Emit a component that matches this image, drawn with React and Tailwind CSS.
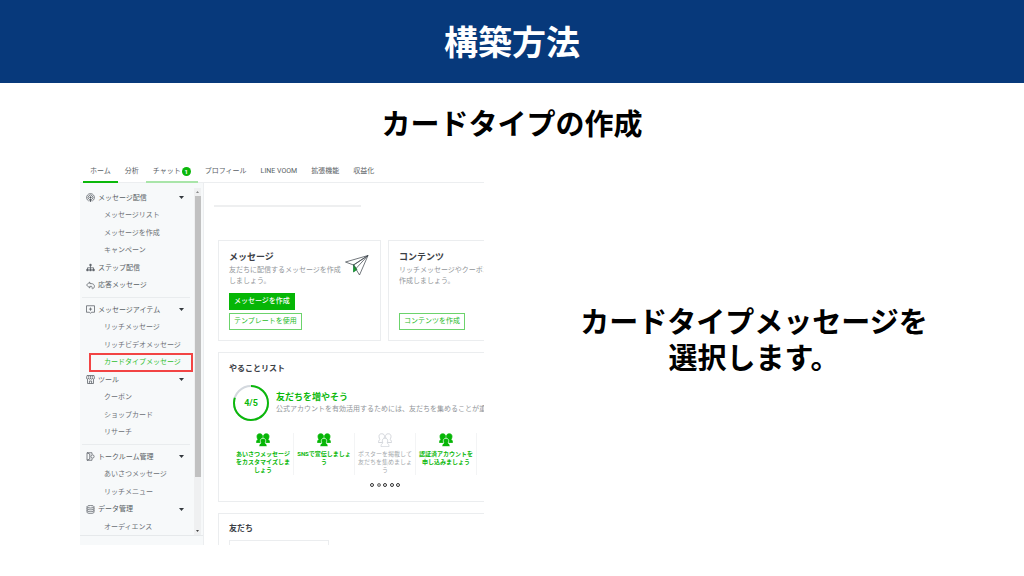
import React from "react";

const tabs = [
  { label: "ホーム", state: "active" },
  { label: "分析" },
  { label: "チャット", state: "hover", badge: "1" },
  { label: "プロフィール" },
  { label: "LINE VOOM" },
  { label: "拡張機能" },
  { label: "収益化" },
];

const groups = [
  {
    height: "h-[105px]",
    rows: [
      { icon: "broadcast", label: "メッセージ配信", open: true },
      { label: "メッセージリスト" },
      { label: "メッセージを作成" },
      { label: "キャンペーン" },
      { icon: "steps", label: "ステップ配信" },
      { icon: "reply", label: "応答メッセージ" },
    ],
  },
  {
    height: "h-[140px]",
    rows: [
      { icon: "item", label: "メッセージアイテム", open: true },
      { label: "リッチメッセージ" },
      { label: "リッチビデオメッセージ" },
      { label: "カードタイプメッセージ", current: true },
      { icon: "shop", label: "ツール", open: true },
      { label: "クーポン" },
      { label: "ショップカード" },
      { label: "リサーチ" },
    ],
  },
  {
    height: "h-[88px]",
    rows: [
      { icon: "room", label: "トークルーム管理", open: true },
      { label: "あいさつメッセージ" },
      { label: "リッチメニュー" },
      { icon: "data", label: "データ管理", open: true },
      { label: "オーディエンス" },
    ],
  },
];

const tasks = [
  { lines: ["あいさつメッセージ", "をカスタマイズしま", "しょう"], done: true },
  { lines: ["SNSで宣伝しましょ", "う"], done: true },
  { lines: ["ポスターを掲載して", "友だちを集めましょ", "う"], done: false },
  { lines: ["認証済アカウントを", "申し込みましょう"], done: true },
];

const iconPaths = {
  broadcast: (
    <>
      <path d="M5.500 16a7.800 7.800 0 1 1 7 0" />
      <path d="M6.200 12.800a4.800 4.800 0 1 1 5.600 0" />
      <circle cx="9" cy="8.800" r="1.500" fill="currentColor" />
      <path d="M7.600 12.200h2.800l-.5 4.600H8.100z" fill="currentColor" />
    </>
  ),
  steps: (
    <>
      <path d="M9 5.500v9M3 13V9.500h12V13" />
      <path d="M7.700 2.500h2.600v3H7.700zM1.500 12.500h3v3h-3zM7.500 12.500h3v3h-3zM13.500 12.500h3v3h-3z" fill="currentColor" />
    </>
  ),
  reply: <path d="M7.500 2 1 8l6.500 6v-3.300h2.700c1.800 0 2.400 1 2 3.200-.2 1.600 1 2 2 1.300 4.500-3 3.300-10-4-10H7.500z" />,
  item: (
    <>
      <path d="M1 1.500h16v13h-6L9 16.800l-2-2.300H1z" />
      <path d="M9 5v6.500M5.800 8.200h6.400" />
    </>
  ),
  shop: (
    <>
      <path d="M2 1h14l1 5.500c0 2-3.700 2.500-4 0-.5 2.500-3.700 2.500-4 0-.3 2.500-3.500 2.500-4 0-.3 2.500-4 2-4 0z" />
      <path d="M3 8.500V17h12V8.500M6.800 17v-5h4.400v5M5.500 1.500v4M9 1.500v4M12.500 1.500v4" />
    </>
  ),
  room: (
    <>
      <path d="M12 5V1.500H2v15h10V13" />
      <path d="M2 1.500 7.500 4v10L2 16.500" />
      <circle cx="13" cy="9" r="3.200" />
    </>
  ),
  data: (
    <>
      <ellipse cx="9" cy="3.500" rx="7" ry="2.500" />
      <path d="M2 3.500v11c0 3.200 14 3.200 14 0v-11M2 7.200c0 3.200 14 3.200 14 0M2 10.900c0 3.200 14 3.200 14 0" />
    </>
  ),
};

function SideIcon({ name }) {
  return (
    <svg viewBox="0 0 18 18" className="size-[9px] shrink-0" fill="none" stroke="currentColor" strokeWidth="1.5" aria-hidden="true">
      {iconPaths[name]}
    </svg>
  );
}

function PeopleIcon({ done }) {
  return (
    <svg
      viewBox="0 0 28 28"
      className={done ? "size-[14px] shrink-0 text-[#06b606]" : "size-[14px] shrink-0 text-[#c9cdd3]"}
      fill={done ? "currentColor" : "none"}
      stroke="currentColor"
      strokeWidth="1.600"
      aria-hidden="true"
    >
      <path d="M7.500 1.500c4 0 5.500 2.500 5.500 5.500 0 2.500-1 4.500-2.500 5.500L9 19H1c0-3 1-5 3-6.200C2.700 11.500 2 9.500 2 7c0-3 1.500-5.500 5.500-5.500z" />
      <path d="M20.500 1.500c-4 0-5.500 2.500-5.500 5.500 0 2.500 1 4.500 2.500 5.500L19 19h8c0-3-1-5-3-6.200 1.300-1.300 2-3.300 2-5.800 0-3-1.500-5.500-5.500-5.500z" />
      <path
        d="M14 10.500c3.800 0 5.500 2.500 5.500 5.300 0 1.800-.6 3.200-1.500 4.200 2.500 1 4 3 4 7.200H6c0-4.200 1.500-6.200 4-7.200-.9-1-1.500-2.400-1.500-4.200 0-2.800 1.700-5.300 5.500-5.300z"
        stroke={done ? "#ffffff" : "currentColor"}
        strokeWidth="1.300"
        fill={done ? "currentColor" : "#ffffff"}
      />
    </svg>
  );
}

function PaperPlane() {
  return (
    <svg viewBox="0 0 48 42" className="mt-1 h-[21px] w-6 shrink-0" fill="none" stroke="#444b52" strokeWidth="1.500" strokeLinejoin="round" aria-hidden="true">
      <path d="M17 19v15l7-5z" fill="#17a527" stroke="#17803a" />
      <path d="M46 1 1 14l16 6zM46 1 17 20l3 5 9 15z" />
      <path d="M46 1 22 27" />
    </svg>
  );
}

function SideRow({ row }) {
  if (row.icon) {
    const inner = (
      <>
        <SideIcon name={row.icon} />
        <span className="flex-1 text-left">{row.label}</span>
        {row.open && (
          <svg viewBox="0 0 10 6" className="h-[3px] w-[5px] text-[#33383d]" aria-hidden="true">
            <path d="M0 0h10L5 6z" fill="currentColor" />
          </svg>
        )}
      </>
    );
    return (
      <li className="flex flex-1">
        {row.open ? (
          <button type="button" aria-expanded="true" className="flex flex-1 items-center gap-[3px] pr-1.5 pl-1">{inner}</button>
        ) : (
          <a href="#" className="flex flex-1 items-center gap-[3px] pl-1">{inner}</a>
        )}
      </li>
    );
  }
  return (
    <li className="flex flex-1">
      {row.current ? (
        <a href="#" aria-current="page" className="-mr-0.5 ml-2 flex flex-1 items-center pl-3.5 text-[#2fbf2f] outline-2 -outline-offset-1 outline-[#f24444]">
          {row.label}
        </a>
      ) : (
        <a href="#" className="flex flex-1 items-center pl-[22px] text-[#6b7076]">{row.label}</a>
      )}
    </li>
  );
}

function Sidebar() {
  return (
    <aside className="w-[124px] shrink-0 border-r border-[#eceef0] bg-[#f7f9fa] text-[#585e64]">
      <div className="flex h-[353px] border-b border-[#e6e9eb]">
        <nav aria-label="メニュー" className="flex-1 overflow-hidden pt-1.5 pr-1 pl-0.5">
          {groups.map((group, i) => (
            <ul
              key={i}
              className={`${group.height} flex flex-col ${i > 0 ? "mt-[3px] box-content border-t border-[#e9ecee] pt-[3px]" : ""}`}
            >
              {group.rows.map((row) => (
                <SideRow key={row.label} row={row} />
              ))}
            </ul>
          ))}
        </nav>
        <div className="mt-[5px] mr-[2px] flex w-[7px] flex-col items-center bg-[#eff0f1] pt-[3px] pb-[3px]" aria-hidden="true">
          <svg viewBox="0 0 6 4" className="h-[2px] w-[3px]"><path d="M0 4h6L3 0z" fill="#888" /></svg>
          <div className="mt-[3px] h-[281px] w-[6px] bg-[#c1c1c1]" />
          <svg viewBox="0 0 6 4" className="mt-auto h-[2px] w-[3px]"><path d="M0 0h6L3 4z" fill="#444" /></svg>
        </div>
      </div>
    </aside>
  );
}

function Card({ title, lines, children, art }) {
  return (
    <section className="flex h-[101px] w-[163px] shrink-0 flex-col border border-[#ebedef] bg-white px-2.5 py-2.5">
      <div className="flex justify-between">
        <div>
          <h3 className="text-[9px] leading-3 font-bold text-[#3b4046]">{title}</h3>
          <p className="mt-0.5 whitespace-nowrap text-[#92969a] leading-[11px]">
            {lines[0]}
            <br />
            {lines[1]}
          </p>
        </div>
        {art}
      </div>
      <div className="mt-auto flex flex-col items-start gap-[3px]">{children}</div>
    </section>
  );
}

function Todo() {
  return (
    <section className="flex h-[150px] w-[334px] flex-col border border-[#ebedef] px-2.5 pt-2.5">
      <h3 className="text-[8px] leading-3 font-bold text-[#3b4046]">やることリスト</h3>
      <div className="mt-2.5 flex items-center gap-[7px] pl-1">
        <svg viewBox="0 0 36 36" className="size-9 shrink-0" role="img" aria-label="4/5">
          <circle cx="18" cy="18" r="17" fill="none" stroke="#d3d8de" strokeWidth="2" />
          <circle cx="18" cy="18" r="17" fill="none" stroke="#0bb80b" strokeWidth="2" pathLength="100" strokeDasharray="80 20" transform="rotate(-90 18 18)" />
          <text x="18" y="21" textAnchor="middle" fontSize="9" fontWeight="700" fill="#0bb80b">4/5</text>
        </svg>
        <div className="whitespace-nowrap">
          <h4 className="text-[9px] leading-3 font-bold text-[#0bb80b]">友だちを増やそう</h4>
          <p className="leading-3 text-[#92969a]">公式アカウントを有効活用するためには、友だちを集めることが重要</p>
        </div>
      </div>
      <ul className="mt-3 ml-1 flex text-[6px] leading-2">
        {tasks.map((task) => (
          <li key={task.lines[0]} className="flex h-[42px] w-[61px] shrink-0 flex-col items-center gap-[3px] border-r border-[#f3f4f5]">
            <PeopleIcon done={task.done} />
            <p className={task.done ? "text-center font-bold whitespace-nowrap text-[#0bb80b]" : "text-center whitespace-nowrap text-[#a5a9ad]"}>
              {task.lines.map((line) => (
                <span key={line} className="block">{line}</span>
              ))}
            </p>
          </li>
        ))}
      </ul>
      <div className="mt-2 flex w-[30px] justify-between self-center">
        {[0, 1, 2, 3, 4].map((n) => (
          <button
            key={n}
            type="button"
            aria-label={`${n + 1}`}
            className={n === 1 ? "size-1 rounded-full border border-[#777] bg-[#bbb]" : "size-1 rounded-full border border-[#333]"}
          />
        ))}
      </div>
    </section>
  );
}

function Console() {
  return (
    <div className="flex h-[385px] w-[404px] shrink-0 flex-col overflow-hidden bg-white text-[7px] text-[#585e64]">
      <nav aria-label="メイン" className="flex h-[23px] shrink-0 border-b border-[#eceef0] pl-[3px]">
        {tabs.map((tab) => (
          <a
            key={tab.label}
            href="#"
            className={`-mb-px flex items-center gap-px border-b-2 px-[7px] pt-0.5 whitespace-nowrap ${
              tab.state === "active" ? "border-[#0bb80b]" : tab.state === "hover" ? "border-[#a9e5a9]" : "border-transparent"
            }`}
          >
            {tab.label}
            {tab.badge && (
              <span className="flex size-[9px] items-center justify-center rounded-full bg-[#0bb80b] text-[6px] font-bold text-white">
                {tab.badge}
              </span>
            )}
          </a>
        ))}
      </nav>
      <div className="flex min-h-0 flex-1">
        <Sidebar />
        <div className="min-w-0 flex-1 overflow-hidden">
          <div className="mt-[22px] ml-2.5 h-0.5 w-[147px] bg-[#eeeff0]" />
          <div className="mt-[33px] ml-3.5 flex flex-col gap-[11px]">
            <div className="flex gap-[7px]">
              <Card title="メッセージ" lines={["友だちに配信するメッセージを作成", "しましょう。"]} art={<div className="-ml-2 pr-px"><PaperPlane /></div>}>
                <button type="button" className="h-[17px] border border-[#06b606] bg-[#06b606] px-1 font-medium text-white">メッセージを作成</button>
                <button type="button" className="h-[17px] border border-[#6cd36c] px-1 text-[#1fbb1f]">テンプレートを使用</button>
              </Card>
              <Card title="コンテンツ" lines={["リッチメッセージやクーポン", "作成しましょう。"]}>
                <button type="button" className="h-[17px] border border-[#6cd36c] px-1 text-[#1fbb1f]">コンテンツを作成</button>
              </Card>
            </div>
            <Todo />
            <section className="w-[334px] border border-[#ebedef] px-2.5 pt-[9px]">
              <h3 className="text-[8px] leading-3 font-bold text-[#3b4046]">友だち</h3>
              <div className="mt-[5px] h-8 w-[100px] border border-[#ebedef]" />
            </section>
          </div>
        </div>
      </div>
    </div>
  );
}

export default function App() {
  return (
    <div className="min-h-screen bg-white font-['Roboto','Noto_Sans_CJK_JP',sans-serif]" lang="ja">
      <header className="flex h-[83px] items-center justify-center bg-[#07397b] pt-1">
        <h1 className="text-[34px] font-bold text-white">構築方法</h1>
      </header>
      <main>
        <h2 className="pt-6 text-center text-[29px] leading-9 font-bold text-black">カードタイプの作成</h2>
        <div className="mt-[17px] flex items-center pl-20">
          <Console />
          <p className="flex-1 pb-6 text-center text-[29px] leading-9 font-bold text-black">
            カードタイプメッセージを
            <br />
            選択します。
          </p>
        </div>
      </main>
    </div>
  );
}
